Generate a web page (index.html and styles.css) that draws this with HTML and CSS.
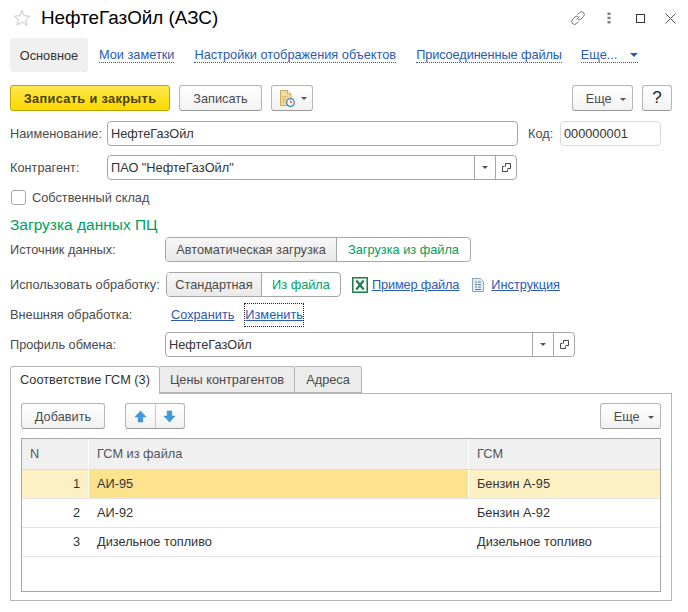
FILE: index.html
```html
<!DOCTYPE html>
<html lang="ru">
<head>
    <meta charset="UTF-8">
    <title>НефтеГазОйл (АЗС)</title>
    <link rel="stylesheet" href="styles.css">
</head>
<body>

<div class="title-bar">
    <svg class="star" width="18" height="18" viewBox="0 0 18 18"><path d="M9 1.500l2.200 5.200 5.600.5-4.200 3.700 1.300 5.500L9 13l-4.900 2.900 1.300-5.500L1.200 7.200l5.600-.5z" fill="none" stroke="#c8c8c8"/></svg>
    <h1>НефтеГазОйл (АЗС)</h1>
    <div class="title-icons">
        <svg class="ico-link" width="16" height="16" viewBox="0 0 16 16"><path d="M6.500 9.500l3-3M7.500 4.500l2-2a2.800 2.800 0 0 1 4 4l-2.500 2.500a2.800 2.800 0 0 1-3 .5M8.500 11.500l-2 2a2.800 2.800 0 0 1-4-4l2.500-2.500a2.800 2.800 0 0 1 3-.5" fill="none" stroke="#707070"/></svg>
        <svg class="ico-dots" width="4" height="12" viewBox="0 0 4 12"><rect x="0.500" y="0.500" width="3" height="2.500" fill="#808080"/><rect x="0.500" y="4.700" width="3" height="2.500" fill="#808080"/><rect x="0.500" y="9" width="3" height="2.500" fill="#808080"/></svg>
        <svg class="ico-max" width="9" height="9" viewBox="0 0 9 9"><rect x="0.500" y="0.500" width="8" height="8" fill="none" stroke="#333"/></svg>
        <svg class="ico-close" width="11" height="11" viewBox="0 0 11 11"><path d="M.5.500l10 10M10.500.500l-10 10" stroke="#555" fill="none"/></svg>
    </div>
</div>

<div class="nav-bar">
    <span class="nav-current">Основное</span>
    <a class="nav-link">Мои заметки</a>
    <a class="nav-link">Настройки отображения объектов</a>
    <a class="nav-link nav-files">Присоединенные файлы</a>
    <a class="nav-link nav-more">Еще... <i class="caret-blue"></i></a>
</div>

<div class="command-bar">
    <button class="btn btn-main">Записать и закрыть</button>
    <button class="btn btn-save">Записать</button>
    <button class="btn btn-history">
        <svg width="16" height="17" viewBox="0 0 16 17"><path d="M1.500.500h7l3.500 3.500v11.500h-10.500z" fill="#f6dc9a" stroke="#c9a860"/><path d="M8.500.500v3.500h3.500" fill="#fff6d8" stroke="#c9a860"/><path d="M3.500 7h5M3.500 9.500h3M3.500 12h3" stroke="#c9a860"/><circle cx="11.500" cy="12.500" r="3.800" fill="#fff" stroke="#3b7fb8" stroke-width="1.300"/><path d="M11.500 10.500v2h1.700" stroke="#c0504d" fill="none"/></svg>
        <i class="caret"></i>
    </button>
    <button class="btn btn-more">Еще <i class="caret"></i></button>
    <button class="btn btn-help">?</button>
</div>

<div class="row row-name">
    <label class="lbl lbl-name">Наименование:</label>
    <div class="field field-name">НефтеГазОйл</div>
    <label class="lbl lbl-code">Код:</label>
    <div class="field field-code">000000001</div>
</div>

<div class="row row-partner">
    <label class="lbl lbl-name">Контрагент:</label>
    <div class="field field-partner">
        <span class="field-text">ПАО "НефтеГазОйл"</span>
        <span class="field-btn"><i class="caret"></i></span>
        <span class="field-btn"><svg width="9" height="9" viewBox="0 0 9 9"><path d="M3.500 3.500v-3h5v5h-3" fill="none" stroke="#444"/><path d="M2.500 3.500h-2v5h5v-2" fill="none" stroke="#444"/></svg></span>
    </div>
</div>

<div class="row-check">
    <span class="checkbox"></span>
    <span class="lbl">Собственный склад</span>
</div>

<h2 class="group-title">Загрузка данных ПЦ</h2>

<div class="row row-source">
    <label class="lbl lbl-wide">Источник данных:</label>
    <div class="toggle">
        <span class="toggle-off toggle-auto">Автоматическая загрузка</span>
        <span class="toggle-on toggle-file">Загрузка из файла</span>
    </div>
</div>

<div class="row row-use">
    <label class="lbl lbl-wide">Использовать обработку:</label>
    <div class="toggle">
        <span class="toggle-off toggle-std">Стандартная</span>
        <span class="toggle-on toggle-own">Из файла</span>
    </div>
    <svg class="ico-xls" width="16" height="16" viewBox="0 0 16 16"><rect x="0.500" y="0.500" width="15" height="15" fill="#fff" stroke="#1f7a4d"/><rect x="1.500" y="1.500" width="13" height="13" fill="#fff" stroke="#7fb79a"/><path d="M4.300 3.500l7.400 9M11.700 3.500l-7.400 9" stroke="#1f7a4d" stroke-width="2.200"/></svg>
    <a class="link link-sample">Пример файла</a>
    <svg class="ico-doc" width="12" height="14" viewBox="0 0 12 14"><path d="M.5.500h8l3 3v10h-11z" fill="#e4edf5" stroke="#8fa6ba"/><path d="M3 4h2M6 4h3M3 6.500h2M6 6.500h3M3 9h2M6 9h3M3 11.500h6" stroke="#5f7a92"/></svg>
    <a class="link link-guide">Инструкция</a>
</div>

<div class="row row-external">
    <label class="lbl lbl-wide">Внешняя обработка:</label>
    <a class="link link-keep">Сохранить</a>
    <a class="link link-focus">Изменить</a>
</div>

<div class="row row-profile">
    <label class="lbl lbl-wide">Профиль обмена:</label>
    <div class="field field-profile">
        <span class="field-text">НефтеГазОйл</span>
        <span class="field-btn"><i class="caret"></i></span>
        <span class="field-btn"><svg width="9" height="9" viewBox="0 0 9 9"><path d="M3.500 3.500v-3h5v5h-3" fill="none" stroke="#444"/><path d="M2.500 3.500h-2v5h5v-2" fill="none" stroke="#444"/></svg></span>
    </div>
</div>

<div class="tabs">
    <span class="tab tab-active">Соответствие ГСМ (3)</span>
    <span class="tab tab-prices">Цены контрагентов</span>
    <span class="tab tab-addr">Адреса</span>
</div>

<div class="tab-panel">
    <div class="table-bar">
        <button class="btn btn-add">Добавить</button>
        <div class="arrows">
            <span class="arrow"><svg width="13" height="13" viewBox="0 0 14 14"><path d="M7 1l6 6.500h-3.500v5.500h-5v-5.500h-3.500z" fill="#3f9bdc" stroke="#2c7fbd" stroke-width="0.500"/></svg></span>
            <span class="arrow"><svg width="13" height="13" viewBox="0 0 14 14"><path d="M7 13l6-6.500h-3.500v-5.500h-5v5.500h-3.500z" fill="#3f9bdc" stroke="#2c7fbd" stroke-width="0.500"/></svg></span>
        </div>
        <button class="btn btn-more btn-more-table">Еще <i class="caret"></i></button>
    </div>
    <div class="grid">
        <div class="grid-row grid-head">
            <div class="c-n">N</div>
            <div class="c-file">ГСМ из файла</div>
            <div class="c-fuel">ГСМ</div>
        </div>
        <div class="grid-row grid-selected">
            <div class="c-n num">1</div>
            <div class="c-file">АИ-95</div>
            <div class="c-fuel">Бензин А-95</div>
        </div>
        <div class="grid-row">
            <div class="c-n num">2</div>
            <div class="c-file">АИ-92</div>
            <div class="c-fuel">Бензин А-92</div>
        </div>
        <div class="grid-row">
            <div class="c-n num">3</div>
            <div class="c-file">Дизельное топливо</div>
            <div class="c-fuel">Дизельное топливо</div>
        </div>
    </div>
</div>

</body>
</html>
```

FILE: styles.css
```css
/* Форма элемента справочника */
* {
    box-sizing: border-box;
}

html, body {
    overflow: hidden;
}

body {
    margin: 0;
    width: 688px;
    height: 612px;
    padding: 0 16px 0 10px;
    background-color: white;
    font-family: "Liberation Sans", Arial, sans-serif;
    font-size: 12.75px;
    color: #4b4b4b;
}

.title-bar {
    display: flex;
    align-items: center;
    height: 38px;
    padding-bottom: 2px;
}

.star {
    margin-left: 3px;
}

h1 {
    margin: 0 0 0 10px;
    font-size: 18.85px;
    font-weight: normal;
    color: black;
}

.title-icons {
    display: flex;
    align-items: center;
    margin-left: auto;
}

.ico-link {
    margin-right: 21px;
}

.ico-dots {
    margin-right: 25px;
}

.ico-max {
    margin-right: 20px;
}

.ico-close {
    margin-right: -4px;
}

.nav-bar {
    display: flex;
    align-items: center;
    height: 34px;
}

.nav-current {
    display: flex;
    align-items: center;
    justify-content: center;
    width: 78px;
    height: 34px;
    border-radius: 3px;
    background-color: #f0f0f0;
    color: #333;
}

.nav-link {
    margin-left: 11px;
    margin-right: 9px;
    color: #2a5bb0;
    border-bottom: 1px dotted #2a5bb0;
    line-height: 14px;
}

.nav-files {
    letter-spacing: -0.100px;
}

.nav-more {
    margin-left: 10px;
}

.caret-blue {
    display: inline-block;
    margin-left: 9px;
    border-left: 4px solid transparent;
    border-right: 4px solid transparent;
    border-top: 4px solid #2a5bb0;
    vertical-align: 2px;
}

.caret {
    display: inline-block;
    border-left: 3.500px solid transparent;
    border-right: 3.500px solid transparent;
    border-top: 3.500px solid #555;
    vertical-align: 2px;
}

.command-bar {
    display: flex;
    height: 26px;
    margin-top: 13px;
}

.btn {
    height: 26px;
    padding: 0;
    border: 1px solid #b5b5b5;
    border-bottom-color: #9a9a9a;
    border-radius: 3px;
    background: linear-gradient(#ffffff, #f2f2f2);
    font: inherit;
    color: #4b4b4b;
}

.btn-main {
    width: 160px;
    border-color: #c2a400;
    background: linear-gradient(#ffe94d, #fcd800);
    font-weight: bold;
    letter-spacing: 0.350px;
    color: #4a4000;
}

.btn-save {
    width: 83px;
    margin-left: 9px;
}

.btn-history {
    display: flex;
    align-items: center;
    width: 42px;
    margin-left: 9px;
    padding-left: 7px;
}

.btn-history .caret {
    margin-left: 6px;
    vertical-align: 0;
}

.btn-more {
    width: 61px;
    margin-left: auto;
    padding-left: 7px;
}

.btn-more .caret {
    margin-left: 5px;
}

.btn-help {
    width: 30px;
    margin-left: 9px;
    font-size: 17px;
    color: #222;
}

.row {
    display: flex;
    align-items: center;
}

.row-name {
    height: 25px;
    margin-top: 10px;
}

.lbl-name {
    width: 97px;
}

.field {
    height: 25px;
    border: 1px solid #a6a6a6;
    border-radius: 4px;
    padding-left: 3px;
    line-height: 23px;
    color: #333;
}

.field-name {
    width: 411px;
}

.lbl-code {
    width: 32px;
    margin-left: 10px;
}

.field-code {
    width: 101px;
    border-color: #d8d8d8;
}

.row-partner {
    height: 25px;
    margin-top: 9px;
}

.field-partner, .field-profile {
    display: flex;
    padding-left: 0;
}

.field-partner {
    width: 410px;
}

.field-profile {
    width: 410px;
}

.field-text {
    flex: 1;
    padding-left: 3px;
}

.field-btn {
    display: flex;
    align-items: center;
    justify-content: center;
    width: 21px;
    border-left: 1px solid #a6a6a6;
}

.row-check {
    display: flex;
    align-items: center;
    height: 15px;
    margin-top: 10px;
    margin-left: 1px;
}

.checkbox {
    width: 15px;
    height: 15px;
    margin-right: 6px;
    border: 1px solid #a6a6a6;
    border-radius: 3px;
}

.group-title {
    height: 20px;
    margin: 10px 0 0;
    font-size: 15.500px;
    font-weight: normal;
    line-height: 20px;
    color: #00a05a;
}

.row-source {
    height: 25px;
    margin-top: 2px;
}

.lbl-wide {
    width: 155px;
}

.toggle {
    display: flex;
    height: 25px;
    border: 1px solid #a6a6a6;
    border-radius: 4px;
    overflow: hidden;
    line-height: 23px;
    text-align: center;
}

.toggle-off {
    border-right: 1px solid #a6a6a6;
    background: linear-gradient(#f7f7f7, #e9e9e9);
}

.toggle-on {
    color: #00a05a;
}

.toggle-auto {
    width: 171px;
}

.toggle-file {
    width: 133px;
}

.row-use {
    height: 25px;
    margin-top: 10px;
}

.row-use .lbl-wide {
    width: 156px;
}

.toggle-std {
    width: 95px;
}

.toggle-own {
    width: 78px;
}

.ico-xls {
    margin-left: 11px;
}

.link {
    color: #2a5bb0;
    text-decoration: underline;
}

.link-sample {
    margin-left: 4px;
    letter-spacing: -0.150px;
}

.ico-doc {
    margin-left: 13px;
}

.link-guide {
    margin-left: 7px;
}

.row-external {
    height: 17px;
    margin-top: 9px;
}

.row-external .lbl-wide {
    width: 161px;
}

.link-focus {
    height: 22px;
    margin-left: 11px;
    line-height: 21px;
    outline: 1px dotted #222;
}

.row-profile {
    height: 25px;
    margin-top: 9px;
}

.tabs {
    display: flex;
    height: 28px;
    margin-top: 9px;
    position: relative;
    z-index: 1;
}

.tab {
    height: 27px;
    border: 1px solid #b5b5b5;
    border-left-width: 0;
    border-radius: 0 3px 0 0;
    background-color: #ececec;
    line-height: 26px;
    text-align: center;
}

.tab-active {
    width: 150px;
    height: 28px;
    border-left-width: 1px;
    border-bottom: none;
    border-radius: 3px 3px 0 0;
    background-color: white;
    color: #333;
}

.tab-prices {
    width: 135px;
}

.tab-addr {
    width: 67px;
}

.tab-panel {
    width: 662px;
    height: 208px;
    margin-top: -1px;
    padding: 9px 10px;
    border: 1px solid #b5b5b5;
}

.table-bar {
    display: flex;
    height: 26px;
}

.btn-add {
    width: 84px;
}

.arrows {
    display: flex;
    width: 60px;
    height: 26px;
    margin-left: 20px;
    border: 1px solid #b5b5b5;
    border-bottom-color: #9a9a9a;
    border-radius: 3px;
    background: linear-gradient(#ffffff, #f2f2f2);
}

.arrow {
    display: flex;
    align-items: center;
    justify-content: center;
    flex: 1;
}

.arrow + .arrow {
    border-left: 1px solid #c8c8c8;
}

.btn-more-table {
    margin-left: auto;
}

.grid {
    height: 154px;
    margin-top: 9px;
    border: 1px solid #a6a6a6;
}

.grid-row {
    display: flex;
    height: 29px;
    border-bottom: 1px solid #e4e4e4;
    line-height: 28px;
    color: #333;
}

.grid-head {
    height: 31px;
    border-bottom: 1px solid #dcdcdc;
    background-color: #f0f0f0;
    line-height: 29px;
    color: #555;
}

.grid-head div + div {
    border-left: 1px solid white;
    padding-left: 8px;
}

.c-n {
    width: 66px;
    padding: 0 8px;
}

.c-file {
    width: 380px;
    padding-left: 9px;
}

.c-fuel {
    flex: 1;
    padding-left: 9px;
}

.num {
    text-align: right;
}

.grid-selected {
    background-color: #fdf1c3;
}

.grid-selected .c-file {
    background-color: #fee38f;
}

.grid-selected div + div {
    border-left: 1px solid white;
    padding-left: 8px;
}
```
